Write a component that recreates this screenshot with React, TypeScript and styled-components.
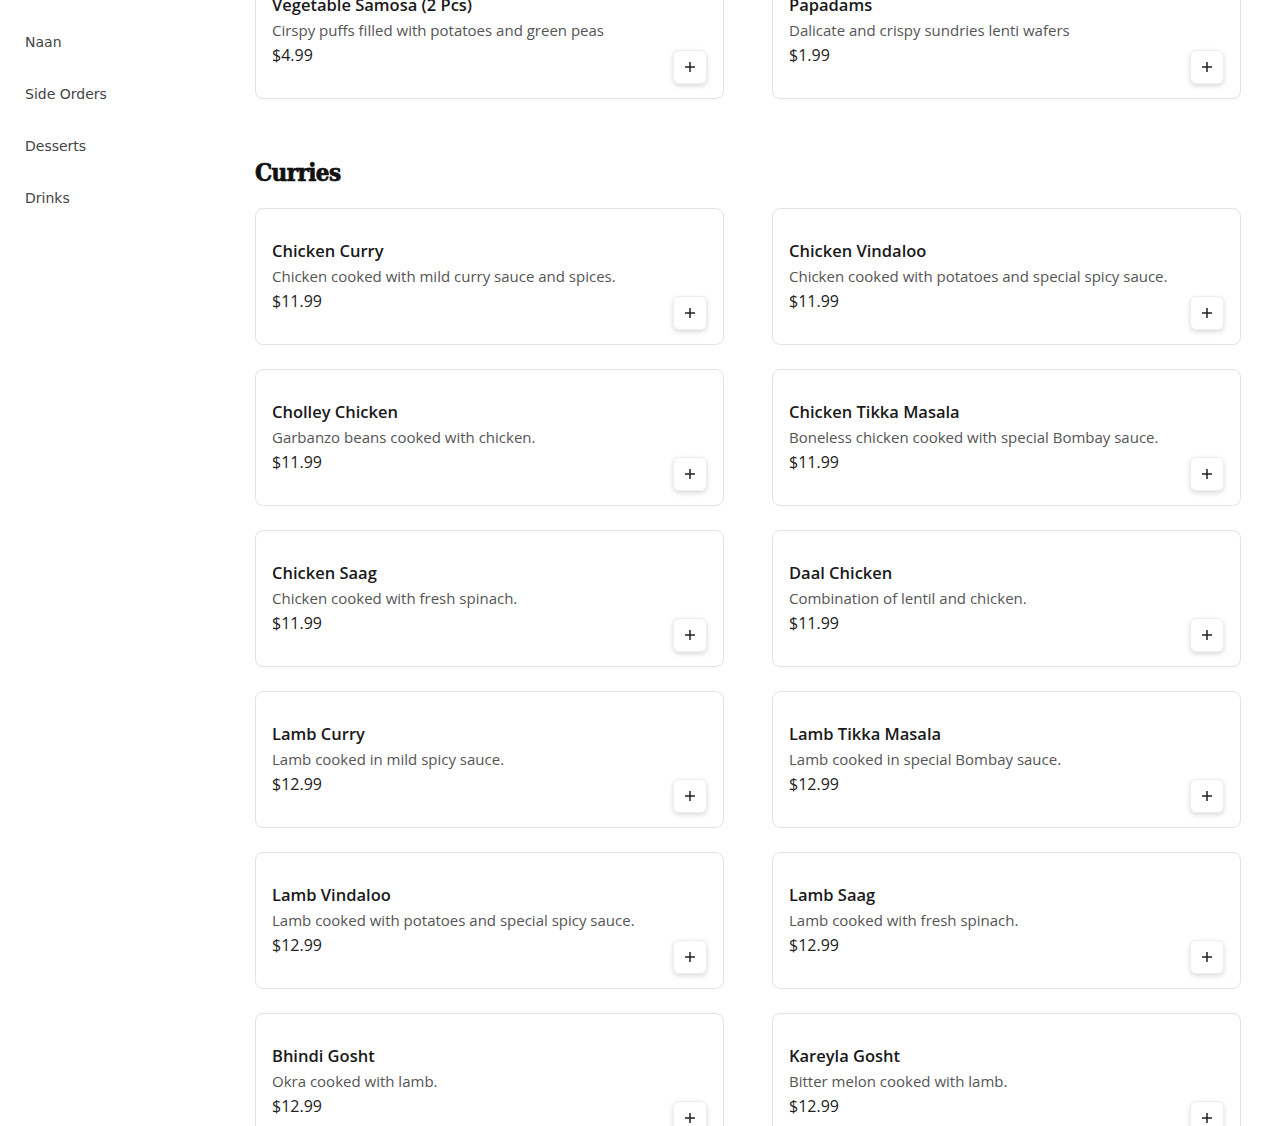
import styled, { createGlobalStyle } from 'styled-components'

const GlobalStyle = createGlobalStyle`
    body {
        margin: 0;
        background: #ffffff;
        font-family: "Open Sans", "Noto Sans", sans-serif;
        color: #1a1a1a;
    }
`

const sideLinks = ['Naan', 'Side Orders', 'Desserts', 'Drinks']

const appetizers = [
    { name: 'Vegetable Samosa (2 Pcs)', desc: 'Cirspy puffs filled with potatoes and green peas', price: '$4.99' },
    { name: 'Papadams', desc: 'Dalicate and crispy sundries lenti wafers', price: '$1.99' },
]

const curries = [
    { name: 'Chicken Curry', desc: 'Chicken cooked with mild curry sauce and spices.', price: '$11.99' },
    { name: 'Chicken Vindaloo', desc: 'Chicken cooked with potatoes and special spicy sauce.', price: '$11.99' },
    { name: 'Cholley Chicken', desc: 'Garbanzo beans cooked with chicken.', price: '$11.99' },
    { name: 'Chicken Tikka Masala', desc: 'Boneless chicken cooked with special Bombay sauce.', price: '$11.99' },
    { name: 'Chicken Saag', desc: 'Chicken cooked with fresh spinach.', price: '$11.99' },
    { name: 'Daal Chicken', desc: 'Combination of lentil and chicken.', price: '$11.99' },
    { name: 'Lamb Curry', desc: 'Lamb cooked in mild spicy sauce.', price: '$12.99' },
    { name: 'Lamb Tikka Masala', desc: 'Lamb cooked in special Bombay sauce.', price: '$12.99' },
    { name: 'Lamb Vindaloo', desc: 'Lamb cooked with potatoes and special spicy sauce.', price: '$12.99' },
    { name: 'Lamb Saag', desc: 'Lamb cooked with fresh spinach.', price: '$12.99' },
    { name: 'Bhindi Gosht', desc: 'Okra cooked with lamb.', price: '$12.99' },
    { name: 'Kareyla Gosht', desc: 'Bitter melon cooked with lamb.', price: '$12.99' },
]

const PlusIcon = () => (
    <svg width="12" height="12" viewBox="0 0 12 12">
        <path d="M6 1v10M1 6h10" stroke="#222" strokeWidth="1.5" />
    </svg>
)

const MenuCard = ({ item }) => {
    return (
        <Card>
            <Info>
                <Title>{item.name}</Title>
                <Desc>{item.desc}</Desc>
                <Price>{item.price}</Price>
            </Info>
            <AddButton aria-label="add">
                <PlusIcon />
            </AddButton>
        </Card>
    )
}

const App = () => {
    return (
        <>
            <GlobalStyle />
            <Page>
                <Sidebar>
                    {sideLinks.map((l) => (
                        <SideLink key={l}>{l}</SideLink>
                    ))}
                </Sidebar>
                <Main>
                    <Grid $top>
                        {appetizers.map((i) => (
                            <MenuCard key={i.name} item={i} />
                        ))}
                    </Grid>
                    <Section>
                        <Heading>Curries</Heading>
                        <Grid>
                            {curries.map((i) => (
                                <MenuCard key={i.name} item={i} />
                            ))}
                        </Grid>
                    </Section>
                </Main>
            </Page>
        </>
    )
}

export default App

const Page = styled.div`
    display: flex;
    height: 1126px;
    overflow: hidden;
`

const Sidebar = styled.nav`
    width: 255px;
    flex-shrink: 0;
    display: flex;
    flex-direction: column;
    gap: 35px;
    padding: 34px 0 0 25px;
    box-sizing: border-box;
`

const SideLink = styled.a`
    font-family: "DejaVu Sans", sans-serif;
    font-size: 14px;
    line-height: 17px;
    color: #444;
`

const Main = styled.main`
    width: 986px;
    flex-shrink: 0;
`

const Grid = styled.div`
    display: grid;
    grid-template-columns: 1fr 1fr;
    column-gap: 48px;
    row-gap: 24px;
    margin-top: ${(p) => (p.$top ? '-38px' : '0')};
`

const Section = styled.section`
    padding-top: 58px;
`

const Heading = styled.h2`
    font-family: "DejaVu Serif", serif;
    font-stretch: condensed;
    font-weight: 900;
    font-size: 24px;
    line-height: 32px;
    letter-spacing: -0.6px;
    margin: 0 0 19px;
    color: #111;
    -webkit-text-stroke: 0.7px #111;
`

const Card = styled.div`
    height: 137px;
    box-sizing: border-box;
    border: 1px solid #e3e3e3;
    border-radius: 8px;
    padding: 32px 16px 14px 16px;
    display: flex;
    justify-content: space-between;
    align-items: flex-end;
`

const Info = styled.div`
    align-self: flex-start;
    display: flex;
    flex-direction: column;
    gap: 5px;
`

const Title = styled.h3`
    margin: 0;
    font-size: 16.5px;
    font-weight: 600;
    line-height: 20px;
    color: #1a1a1a;
`

const Desc = styled.p`
    margin: 0;
    font-size: 15px;
    line-height: 20px;
    color: #555;
`

const Price = styled.span`
    font-size: 16px;
    line-height: 20px;
    color: #222;
`

const AddButton = styled.button`
    width: 34px;
    height: 34px;
    display: flex;
    align-items: center;
    justify-content: center;
    background: #fff;
    border: 1px solid #eee;
    border-radius: 6px;
    box-shadow: 0 2px 5px rgba(0, 0, 0, 0.15);
    padding: 0;
    cursor: pointer;
`
